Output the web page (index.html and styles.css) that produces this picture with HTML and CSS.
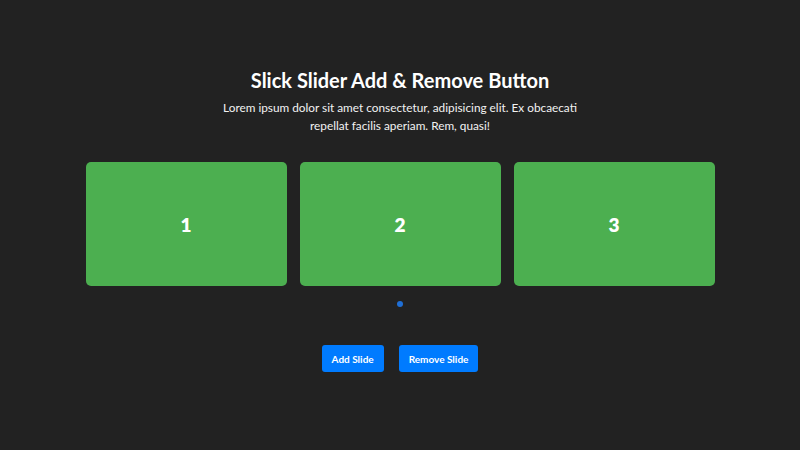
FILE: index.html
```html
<!DOCTYPE html>
<html>
<head>
    <title>Slick Slider Add & Remove Button</title>
    <meta charset="UTF-8">
    <link rel="stylesheet" href="styles.css">
</head>
<body>
    <section class="wrapper">
        <h2 class="title">Slick Slider Add &amp; Remove Button</h2>
        <p class="intro">Lorem ipsum dolor sit amet consectetur, adipisicing elit. Ex obcaecati repellat facilis aperiam. Rem, quasi!</p>
        <div class="slider">
            <div class="slide"><span>1</span></div>
            <div class="slide"><span>2</span></div>
            <div class="slide"><span>3</span></div>
        </div>
        <ul class="dots">
            <li class="dot active"></li>
        </ul>
        <div class="controls">
            <button type="button" class="btn" id="add">Add Slide</button>
            <button type="button" class="btn" id="remove">Remove Slide</button>
        </div>
    </section>
</body>
</html>
```

FILE: styles.css
```css
html {
    height: 100%;
}

body {
    margin: 0;
    height: 100%;
    background-color: #222222;
    color: #ffffff;
    font-family: Lato, "Noto Sans", sans-serif;
}

.wrapper {
    display: flex;
    flex-direction: column;
    align-items: center;
    padding-top: 68px;
}

.title {
    margin: 0;
    font-size: 20px;
    line-height: 24px;
    font-weight: 700;
}

.intro {
    width: 362px;
    margin: 7px 0 0;
    font-size: 11.8px;
    line-height: 18px;
    text-align: center;
    color: #f2f2f2;
}

.slider {
    display: flex;
    gap: 13px;
    margin-top: 27px;
}

.slide {
    width: 201px;
    height: 124px;
    background-color: #4caf50;
    border-radius: 5px;
    display: flex;
    align-items: center;
    justify-content: center;
    font-size: 19px;
    font-weight: 800;
}

.dots {
    list-style: none;
    margin: 15px 0 0;
    padding: 0;
    display: flex;
}

.dot {
    width: 6px;
    height: 6px;
    border-radius: 50%;
    background-color: #1f6fd6;
}

.controls {
    display: flex;
    gap: 15px;
    margin-top: 38px;
}

.btn {
    height: 27px;
    padding: 0 10px;
    border: none;
    border-radius: 3px;
    background-color: #007bff;
    color: #ffffff;
    font-family: inherit;
    font-size: 10px;
    font-weight: 700;
}
```
